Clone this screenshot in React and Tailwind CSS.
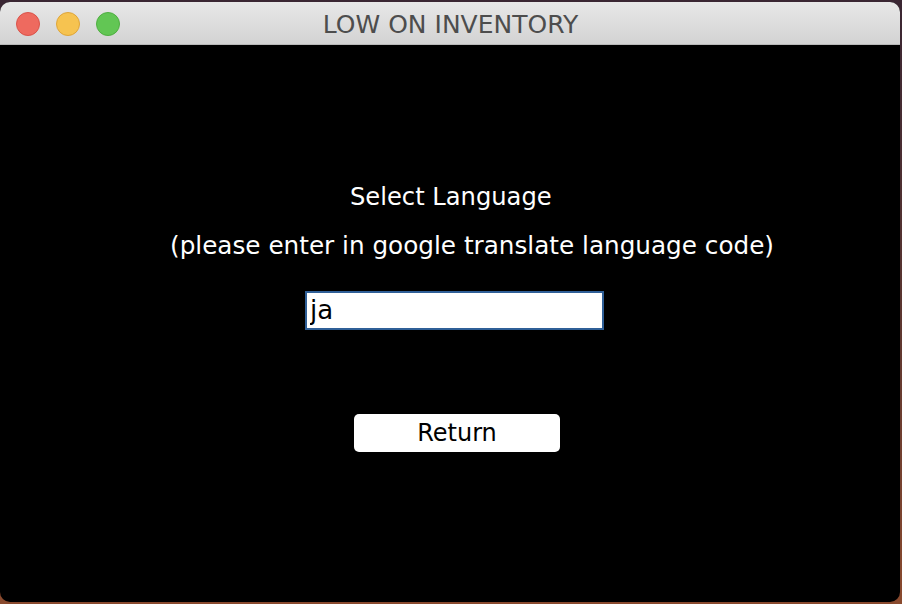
const App = () => {
  return (
    <div className="w-[902px] h-[604px] bg-gradient-to-b from-[#3a2633] via-[#5a3530] to-[#8a4a2e] pt-[2px] pr-[2px] pb-[2px] overflow-hidden">
      <div className="w-[900px] h-[600px] rounded-[10px] overflow-hidden bg-black flex flex-col">
        {/* title bar */}
        <div className="relative h-[43px] shrink-0 bg-gradient-to-b from-[#e8e8e8] to-[#d3d3d3] border-b border-[#b8b8b8] flex items-center justify-center">
          <div className="absolute left-[16px] top-[10px] flex gap-[16px]">
            <span className="block w-[24px] h-[24px] rounded-full bg-[#ee6a5f] border border-[#d9534a]" />
            <span className="block w-[24px] h-[24px] rounded-full bg-[#f6c350] border border-[#dea53a]" />
            <span className="block w-[24px] h-[24px] rounded-full bg-[#62c654] border border-[#4fae41]" />
          </div>
          <span className="font-['DejaVu_Sans',sans-serif] text-[25px] text-[#4d4d4d] leading-none pt-[2px] pl-[1px]">
            LOW ON INVENTORY
          </span>
        </div>

        {/* body */}
        <div className="flex-1 flex flex-col items-start pt-[137px] font-['DejaVu_Sans',sans-serif] text-white">
          <p className="ml-[350px] text-[24.2px] leading-[30px]">Select Language</p>
          <p className="ml-[170px] text-[24.7px] leading-[30px] mt-[19px] whitespace-nowrap">
            (please enter in google translate language code)
          </p>
          <input
            defaultValue="ja"
            className="ml-[305px] mt-[30px] w-[299px] h-[39px] bg-white border-2 border-[#2f5f97] px-[3px] text-black text-[26px] font-['DejaVu_Sans',sans-serif] outline-none"
          />
          <button className="ml-[354px] mt-[84px] w-[206px] h-[38px] rounded-[5px] bg-white text-black text-[24px] leading-none">
            Return
          </button>
        </div>
      </div>
    </div>
  );
};

export default App;
